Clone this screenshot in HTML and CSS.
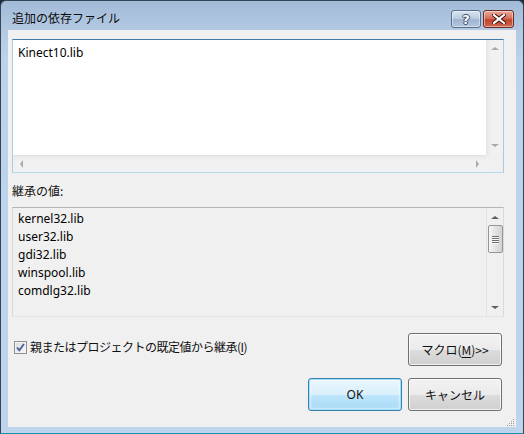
FILE: index.html
```html
<!DOCTYPE html>
<html lang="ja">
<head>
<meta charset="utf-8">
<link rel="stylesheet" href="styles.css">
</head>
<body>
<div class="window">
  <div class="titlebar">
    <span class="title">追加の依存ファイル</span>
    <div class="caption-btns">
      <div class="cbtn help"><span>?</span></div>
      <div class="cbtn close">
        <svg width="14" height="10" viewBox="0 0 14 10"><path d="M2 1 L12 9 M12 1 L2 9" stroke="#3a0d06" stroke-width="4" stroke-linecap="square"/><path d="M2 1 L12 9 M12 1 L2 9" stroke="#fff" stroke-width="2.2" stroke-linecap="square"/></svg>
      </div>
    </div>
  </div>
  <div class="client">
    <div class="editbox">
      <div class="edit-main">
        <div class="edit-text">Kinect10.lib</div>
        <div class="hscroll">
          <span class="arr arr-left light"></span>
          <span class="arr arr-right light"></span>
        </div>
      </div>
      <div class="vcol">
        <div class="vscroll">
          <span class="arr arr-up light"></span>
          <span class="arr arr-down light"></span>
        </div>
        <div class="corner"></div>
      </div>
    </div>

    <div class="label">継承の値:</div>

    <div class="listbox">
      <div class="list-items">
        <div class="item">kernel32.lib</div>
        <div class="item">user32.lib</div>
        <div class="item">gdi32.lib</div>
        <div class="item">winspool.lib</div>
        <div class="item">comdlg32.lib</div>
      </div>
      <div class="lscroll">
        <span class="arr arr-up"></span>
        <div class="thumb"><i></i><i></i><i></i><i></i></div>
        <span class="arr arr-down"></span>
      </div>
    </div>

    <div class="row1">
      <label class="check">
        <span class="box">
          <svg width="9" height="9" viewBox="0 0 9 9"><path d="M1 4.5 L3.3 7.2 L8 1" fill="none" stroke="#4a5f9a" stroke-width="1.8"/></svg>
        </span>
        <span class="check-text">親またはプロジェクトの既定値から継承(<u>I</u>)</span>
      </label>
      <div class="btn">マクロ(<u>M</u>)&gt;&gt;</div>
    </div>

    <div class="row2">
      <div class="btn default">OK</div>
      <div class="btn">キャンセル</div>
    </div>

    <div class="grip">
      <svg width="10" height="10" viewBox="0 0 10 10" fill="#9a9a9a">
        <rect x="8" y="2" width="1" height="1"/><rect x="6" y="4" width="1" height="1"/><rect x="8" y="4" width="1" height="1"/>
        <rect x="4" y="6" width="1" height="1"/><rect x="6" y="6" width="1" height="1"/><rect x="8" y="6" width="1" height="1"/>
        <rect x="2" y="8" width="1" height="1"/><rect x="4" y="8" width="1" height="1"/><rect x="6" y="8" width="1" height="1"/><rect x="8" y="8" width="1" height="1"/>
      </svg>
    </div>
  </div>
</div>
</body>
</html>
```

FILE: styles.css
```css
* { box-sizing: border-box; }
html, body {
  margin: 0;
  padding: 0;
  width: 524px;
  height: 434px;
  background: #1f2b38;
  overflow: hidden;
}
body {
  font-family: "Noto Sans", "Noto Sans CJK JP", sans-serif;
  font-size: 12px;
  color: #000;
}
.window {
  width: 524px;
  height: 434px;
  border: 1px solid #34465a;
  border-bottom-color: #1c8fa8;
  border-radius: 6px 6px 0 0;
  background: linear-gradient(#a2bbd7 0px, #b4cae3 30px, #bcd3ec 60px, #bdd4ec 100%);
  padding: 0 7px 6px 7px;
  display: flex;
  flex-direction: column;
}
.titlebar {
  height: 29px;
  flex: none;
  display: flex;
  align-items: flex-start;
  justify-content: space-between;
}
.title {
  font-family: "Noto Sans CJK JP", sans-serif;
  font-size: 12px;
  margin: 8px 0 0 4px;
  line-height: 18px;
  color: #0b0b0b;
}
.caption-btns {
  display: flex;
  gap: 2px;
  margin-top: 9px;
  margin-right: 2px;
}
.cbtn {
  height: 18px;
  border: 1px solid #5a6f89;
  border-radius: 3px;
  display: flex;
  align-items: center;
  justify-content: center;
  box-shadow: inset 0 0 0 1px rgba(255,255,255,0.45);
}
.help {
  width: 30px;
  background: linear-gradient(#d7e3f1 0%, #bccde2 45%, #9db4d1 55%, #b2c6de 100%);
}
.help span {
  font-family: "DejaVu Sans", sans-serif;
  font-weight: bold;
  font-size: 13px;
  line-height: 13px;
  color: #fff;
  text-shadow: 1px 0 0 #3a4d66, -1px 0 0 #3a4d66, 0 1px 0 #3a4d66, 0 -1px 0 #3a4d66;
}
.close {
  width: 31px;
  border-color: #6b2a22;
  background: linear-gradient(#e9a99c 0%, #d7705c 45%, #c0422c 55%, #d0684f 100%);
}
.client {
  position: relative;
  flex: 1;
  background: #f0f0f0;
  padding: 9px 12px 0 4px;
  display: flex;
  flex-direction: column;
}
.editbox {
  height: 134px;
  flex: none;
  display: flex;
  border: 1px solid #a7cbe4;
  border-top-color: #3e7bab;
  border-bottom-color: #b7d9ed;
  background: #fff;
}
.edit-main {
  flex: 1;
  display: flex;
  flex-direction: column;
}
.edit-text {
  flex: 1;
  padding: 5px 0 0 5px;
  line-height: 16px;
}
.hscroll {
  height: 17px;
  background: linear-gradient(#e8e8e8, #f1f1f1 30%, #f1f1f1);
  border-top: 1px solid #e3e3e3;
  display: flex;
  align-items: center;
  justify-content: space-between;
  padding: 0 7px;
}
.vcol {
  width: 17px;
  display: flex;
  flex-direction: column;
}
.vscroll {
  flex: 1;
  background: linear-gradient(90deg, #e8e8e8, #f1f1f1 30%, #f1f1f1);
  border-left: 1px solid #e3e3e3;
  display: flex;
  flex-direction: column;
  align-items: center;
  justify-content: space-between;
  padding: 7px 0 8px;
}
.corner {
  height: 17px;
  background: #f0f0f0;
}
.arr {
  width: 0;
  height: 0;
  border: 4px solid transparent;
}
.arr-up { border-bottom: 3px solid #606060; border-top-width: 0; }
.arr-down { border-top: 3px solid #606060; border-bottom-width: 0; }
.arr-left { border-right: 3px solid #606060; border-left-width: 0; }
.arr-right { border-left: 3px solid #606060; border-right-width: 0; }
.arr.light.arr-up { border-bottom-color: #a9a9a9; }
.arr.light.arr-down { border-top-color: #a9a9a9; }
.arr.light.arr-left { border-right-color: #a9a9a9; }
.arr.light.arr-right { border-left-color: #a9a9a9; }

.label {
  font-family: "Noto Sans CJK JP", sans-serif;
  margin: 9px 0 0 0;
  height: 18px;
  line-height: 18px;
  color: #111;
}
.listbox {
  margin-top: 7px;
  height: 110px;
  flex: none;
  display: flex;
  border: 1px solid #b4b4b4;
  border-right-color: #dadada;
  border-bottom-color: #e3e3e3;
  border-left-color: #dadada;
  background: #f0f0f0;
}
.list-items {
  flex: 1;
  padding: 2px 0 0 5px;
}
.item {
  height: 18px;
  line-height: 18px;
}
.lscroll {
  flex: none;
  width: 17px;
  background: #f0f0f0;
  border-left: 1px solid #e2e2e2;
  display: flex;
  flex-direction: column;
  align-items: center;
  padding: 8px 0 7px;
}
.lscroll .arr-down { margin-top: auto; }
.thumb {
  margin-top: 6px;
  width: 15px;
  height: 28px;
  border: 1px solid #959595;
  border-radius: 2px;
  background: linear-gradient(90deg, #f5f5f5, #e2e2e2 50%, #d2d2d2);
  display: flex;
  flex-direction: column;
  align-items: center;
  justify-content: center;
  gap: 1px;
}
.thumb i {
  display: block;
  width: 7px;
  height: 1px;
  background: #6d6d6d;
  box-shadow: 0 1px 0 #fafafa;
}
.row1 {
  margin-top: 16px;
  margin-right: 2px;
  display: flex;
  align-items: flex-start;
  justify-content: space-between;
  height: 33px;
}
.check {
  display: flex;
  align-items: center;
  margin: 6px 0 0 2px;
  gap: 3px;
}
.box {
  width: 13px;
  height: 13px;
  border: 1px solid #8f8f8f;
  background: linear-gradient(135deg, #dcdcdc, #f6f6f6);
  display: flex;
  align-items: center;
  justify-content: center;
  box-shadow: inset 0 0 0 1px #f4f4f4;
}
.check-text {
  font-family: "Noto Sans CJK JP", sans-serif;
  line-height: 16px;
  letter-spacing: -0.5px;
  color: #111;
}
.check-text u, .btn u { text-decoration: underline; text-underline-offset: 2px; }
.btn {
  width: 94px;
  height: 33px;
  border: 1px solid #707070;
  border-radius: 3px;
  background: linear-gradient(#f2f2f2 0%, #ebebeb 50%, #dddddd 51%, #cfcfcf 100%);
  box-shadow: inset 0 0 0 1px rgba(255,255,255,0.7);
  display: flex;
  align-items: center;
  justify-content: center;
  font-family: "Noto Sans CJK JP", sans-serif;
  color: #111;
}
.row2 {
  margin-top: 12px;
  margin-right: 2px;
  display: flex;
  justify-content: flex-end;
  gap: 6px;
}
.btn.default {
  border-color: #3c7fb1;
  background: linear-gradient(#eaf6fd 0%, #d9f0fc 50%, #bee6fd 51%, #a7d9f5 100%);
  box-shadow: inset 0 0 0 1px #9ee0f7, inset 0 0 2px 2px rgba(255,255,255,0.5);
  font-family: "Noto Sans", sans-serif;
}
.grip {
  position: absolute;
  right: 1px;
  bottom: 0px;
  width: 10px;
  height: 10px;
  display: flex;
}
```
